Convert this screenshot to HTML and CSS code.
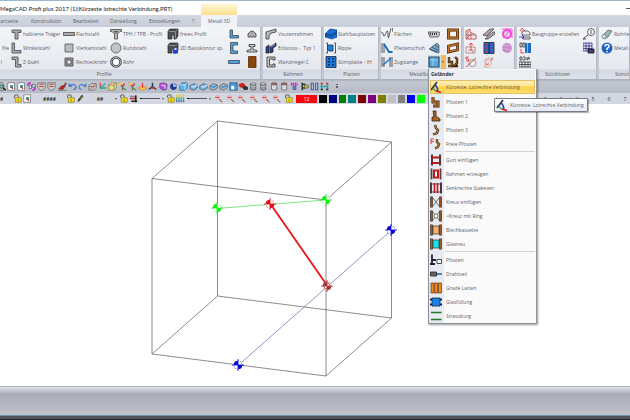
FILE: index.html
```html
<!DOCTYPE html>
<html lang="de">
<head>
<meta charset="utf-8">
<title>MegaCAD Profi plus 2017</title>
<link rel="stylesheet" href="styles.css">
</head>
<body>
<svg class="sprite" aria-hidden="true">
  <!-- steel profiles -->
  <symbol id="tee" viewBox="0 0 12 12"><path d="M2 2h9v2.500H8V11H5V4.500H2z" fill="#a9abb0" stroke="#444"/></symbol>
  <symbol id="ell" viewBox="0 0 12 12"><path d="M2 1h2.500v7.500H11V11H2z" fill="#a9abb0" stroke="#444"/></symbol>
  <symbol id="zed" viewBox="0 0 12 12"><path d="M2 1h6v7.500h3V11H5.500V3.500H2z" fill="#a9abb0" stroke="#444"/></symbol>
  <symbol id="flat" viewBox="0 0 12 12"><path d="M.5 4.500h11v3H.5z" fill="#a9abb0" stroke="#444"/></symbol>
  <symbol id="square" viewBox="0 0 12 12"><path d="M2 2h8v8H2z" fill="#b9bbbf" stroke="#555"/></symbol>
  <symbol id="tube" viewBox="0 0 12 12"><path d="M2 2h8v8H2zM4 4h4v4H4z" fill="#999" fill-rule="evenodd" stroke="#444"/></symbol>
  <symbol id="tph" viewBox="0 0 12 12"><path d="M.5 1.500h11v2H10L7.500 6v5h-3V6L2 3.500H.5zM4 3.500h4L6 5.500z" fill="#bbb" stroke="#444" stroke-width=".8"/></symbol>
  <symbol id="round" viewBox="0 0 12 12"><circle cx="6" cy="6" r="5" fill="#c2c4c7" stroke="#555"/></symbol>
  <symbol id="pipe" viewBox="0 0 12 12"><circle cx="6" cy="6" r="4.500" fill="#fff" stroke="#444" stroke-width="2.600"/><circle cx="6" cy="6" r="4.500" fill="none" stroke="#bbb" stroke-width="1"/></symbol>
  <symbol id="free" viewBox="0 0 12 12"><path d="M1 3l2-2h8v7l-2 3H7V7H5v4H1z" fill="#4d4f54" stroke="#222" stroke-width=".7"/><path d="M1.500 3.500h7l2-2M8.500 3.500v7" stroke="#999" fill="none"/></symbol>
  <symbol id="contour" viewBox="0 0 12 12"><path d="M1 3l2-2h8v7l-2 3H7V7H5v4H1z" fill="#4d4f54" stroke="#222" stroke-width=".7"/><path d="M1.500 3.500h7l2-2" stroke="#999" fill="none"/><path d="M6 6h5v5.500H6z" fill="#2440e0"/><path d="M7.500 6h2v2h-2z" fill="#dde"/></symbol>
  <symbol id="bluell" viewBox="0 0 12 12"><path d="M2 2h2.500v5.500H10.500V10H2z" fill="#4aa3e6" stroke="#444" stroke-width=".8"/></symbol>
  <symbol id="bluec" viewBox="0 0 12 12"><path d="M2.500.5h7v2.500H5v6h4.500v2.500h-7z" fill="#4aa3e6" stroke="#444" stroke-width=".8"/></symbol>
  <symbol id="blueflat" viewBox="0 0 12 12"><path d="M.5 4.500h11v3H.5z" fill="#4aa3e6" stroke="#445"/></symbol>
  <symbol id="dome" viewBox="0 0 12 12"><path d="M2 9V6q2-3 4-3t4 3v3z" fill="#aaa" stroke="#444"/></symbol>
  <symbol id="rail" viewBox="0 0 12 12"><path d="M3 2.500h6v2H7v3l4 1v1.500H1V8.500l4-1v-3H3z" fill="#ccc" stroke="#333"/></symbol>
  <symbol id="wood" viewBox="0 0 12 12"><path d="M2.500.5h7.500v11H2.500z" fill="#8a4608" stroke="#5a2c05"/></symbol>
  <!-- frames and plates -->
  <symbol id="haunch" viewBox="0 0 12 12"><path d="M1 11V4l10-3v3L6 5 4 8v3z" fill="#bbb" stroke="#333"/></symbol>
  <symbol id="corner" viewBox="0 0 12 12"><path d="M1 5l3-2v8H1zM5 5l6-4v3L8 6v4l-3 1z" fill="#264a8c" stroke="#222"/><path d="M6 5l4-3" stroke="#bbb"/></symbol>
  <symbol id="cee" viewBox="0 0 12 12"><path d="M2 1h8v3H8V3H4.500v6H8V8h2v3H2z" fill="#c4c4c4" stroke="#333"/></symbol>
  <symbol id="plates" viewBox="0 0 12 12"><path d="M0 6l5-5 7 1v7l-5 2-7-2z" fill="#1673d4" stroke="#123e86" stroke-width=".7"/><path d="M0 6l7 1 5-4M0 7.500l7 1 5-4" stroke="#0b3778" fill="none" stroke-width=".8"/></symbol>
  <symbol id="rib" viewBox="0 0 12 12"><path d="M1 1h1.500v10H1M9 1h1.500v10H9" fill="none" stroke="#333"/><path d="M2.500 3H8v6H4L2.500 7.500z" fill="#1d7fe0" stroke="#135"/></symbol>
  <symbol id="endplate" viewBox="0 0 12 12"><path d="M1 .5h10v11H1z" fill="#1c7bdc" stroke="#124"/><path d="M4 2v8M8 2v8" stroke="#012" stroke-width="1.500" stroke-dasharray="1.500 1.500"/></symbol>
  <!-- metal construction -->
  <symbol id="faces" viewBox="0 0 12 12"><path d="M0 4q2 0 2.500 3T5 5t2 2 2-3 3 0" fill="none" stroke="#333"/></symbol>
  <symbol id="purlin" viewBox="0 0 12 12"><path d="M1 1v10M3 1v10M7 10h5" stroke="#333"/><path d="M3 2l5 8h3" stroke="#1670c8" stroke-width="2" fill="none"/></symbol>
  <symbol id="tie" viewBox="0 0 12 12"><path d="M1 1v10M3 1v10M9 1v10M11 1v10" stroke="#333"/><path d="M2 9l8-7" stroke="#1a7ad8" stroke-width="1.500"/></symbol>
  <symbol id="grating" viewBox="0 0 12 12"><path d="M0 4h11l1 2-2 3H2z" fill="#ccc" stroke="#444"/><path d="M2 6h8" stroke="#333" stroke-width="2" stroke-dasharray="1 1"/></symbol>
  <symbol id="stairs" viewBox="0 0 12 12"><path d="M1 7l8-6 2 2v8L7 10z" fill="#7fa8c8" stroke="#456" stroke-width=".7"/><path d="M4 5l7 4M7 3l4 3M2 7l7 3" stroke="#245"/></symbol>
  <symbol id="frame" viewBox="0 0 12 12"><path d="M1.500 2h9v8h-9z" fill="none" stroke="#432007" stroke-width="3"/><path d="M1.500 2h9v8h-9z" fill="none" stroke="#c77722" stroke-width="1.600"/></symbol>
  <symbol id="skew" viewBox="0 0 12 12"><path d="M1.500 4l9-2v6l-9 2z" fill="none" stroke="#432007" stroke-width="2.800"/><path d="M1.500 4l9-2v6l-9 2z" fill="none" stroke="#c77722" stroke-width="1.400"/></symbol>
  <symbol id="window" viewBox="0 0 12 12"><path d="M1 1h10v10H1z" fill="#58a9de" stroke="#345" stroke-width="1.200"/><path d="M5 2v8M2 4h8" stroke="#a5d5f2"/></symbol>
  <symbol id="posts" viewBox="0 0 12 12"><path d="M2 1v5h3v4H1M8 1l2 2v4l-3 3h4" fill="none" stroke="#3a2008" stroke-width="2.400"/><path d="M2 1v5h3v4H1M8 1l2 2v4l-3 3" fill="none" stroke="#b87832"/></symbol>
  <symbol id="redframe" viewBox="0 0 12 12"><path d="M1 11V3l4-2v3l6 3v4z" fill="#eee" stroke="#c33"/><path d="M1 7h9M3 3v8M6 5v6M1 11l5-5" stroke="#a55" stroke-width=".8"/></symbol>
  <symbol id="redup" viewBox="0 0 12 12"><path d="M1 11V5h9v6zM3 8h5v3" fill="#eee" stroke="#a77"/><path d="M6 9V1M4 3l2-2 2 2" stroke="#e22" fill="none"/></symbol>
  <symbol id="redcut" viewBox="0 0 12 12"><circle cx="7.500" cy="7" r="3.500" fill="#eee" stroke="#888"/><path d="M1 11L11 2M3.500 1H1v2h2.500v2H1" stroke="#d22" fill="none"/></symbol>
  <symbol id="beams" viewBox="0 0 12 12"><path d="M0 7l7-6h4L4 8zM2 11l8-7h2v2l-7 5z" fill="#aaa" stroke="#444"/><path d="M3 8l7-6" stroke="#b05090"/></symbol>
  <symbol id="bolts" viewBox="0 0 12 12"><path d="M1 .5h10v11H1z" fill="#246ad0" stroke="#123"/><path d="M3.500 2v9M8.500 2v9" stroke="#d22" stroke-width="1.500" stroke-dasharray="1.500 2"/><path d="M6 1v10" stroke="#012"/></symbol>
  <symbol id="redbox" viewBox="0 0 12 12"><path d="M2 4l3-2h5L8 4v5l-2 2H2zM2 4h6M2 7h4" fill="#f4e8e8" stroke="#c99"/><path d="M8 4l2-1M3 9l3-1" stroke="#d44"/></symbol>
  <symbol id="ring" viewBox="0 0 12 12"><circle cx="6" cy="6" r="4" fill="#e6d9ea" stroke="#f4d" stroke-width="2"/><path d="M2 10l8-8M11 1v9M1 1h10" stroke="#e3c"/></symbol>
  <symbol id="ball" viewBox="0 0 12 12"><circle cx="6" cy="6" r="5" fill="#c48fc4"/><path d="M2 3l8 1M1 6l9 2" stroke="#e5b8e5"/></symbol>
  <!-- lists -->
  <symbol id="group" viewBox="0 0 12 12"><path d="M3 3h6l2 2v2H3zM4 9h7v2H4z" fill="#eee" stroke="#444"/><path d="M1 3l2-3 3 3" stroke="#d22" fill="none"/><path d="M0 9h5M3 7l2 2-2 2" stroke="#22c" fill="none"/></symbol>
  <symbol id="dbl" viewBox="0 0 12 12"><path d="M1 1v4h2V1zM4 1v4h2V1z" fill="none" stroke="#333"/><path d="M2 7v4h3" stroke="#e22" fill="none"/><path d="M6 1h6v10H6z" fill="#1b6fc0"/><path d="M8.500 1v10" stroke="#9cd"/></symbol>
  <symbol id="table" viewBox="0 0 12 12"><path d="M1 1v3h2V1zM4 1h2v3H4M8 1v3l2-3v3M0 6h12v5H0zM3 6v5M6 6v5M9 6v5M0 8.500h12" fill="none" stroke="#333"/></symbol>
  <symbol id="balloon" viewBox="0 0 12 12"><circle cx="8" cy="4" r="3.500" fill="#fff" stroke="#333"/><path d="M8 2v4M5 7l-5 4M0 11l3 0" stroke="#222"/></symbol>
  <symbol id="listprint" viewBox="0 0 12 12"><path d="M0 1h9v8H0zM3 1v8M6 1v8M0 4h9M0 6.500h9" fill="#dde" stroke="#338"/><path d="M5 7h6v4H5z" fill="#445" stroke="#113"/></symbol>
  <symbol id="rohr" viewBox="0 0 12 12"><path d="M1 8L7 2l4 1-4 6-4 2z" fill="#9cb6a8" stroke="#567"/><circle cx="3" cy="8.500" r="2" fill="#e8f0ee" stroke="#678"/></symbol>
  <symbol id="help" viewBox="0 0 12 12"><circle cx="6" cy="6" r="5.500" fill="#1c62c4"/><path d="M4 4.500q0-2 2-2t2 1.700q0 1-2 2.300V8M6 9v1.300" stroke="#fff" stroke-width="1.500" fill="none"/></symbol>
  <!-- railing menu -->
  <symbol id="perp" viewBox="0 0 12 12"><path d="M1 9L7 1" stroke="#234" stroke-width="1.600"/><path d="M5 4q2 1 3 6" fill="none" stroke="#1840d0" stroke-width="1.500"/><path d="M3 7q1 3 4 3" fill="none" stroke="#2a6" stroke-width="1.200"/><path d="M6 10l5 1.500" stroke="#e11" stroke-width="1.500"/></symbol>
  <symbol id="post1" viewBox="0 0 12 12"><path d="M3 1v5h5v4H3" fill="none" stroke="#402008" stroke-width="3"/><path d="M3 1v5h5v4H3" fill="none" stroke="#b06c28" stroke-width="1.600"/></symbol>
  <symbol id="post2" viewBox="0 0 12 12"><path d="M3 1h3v5l4 3v2H2V7h2z" fill="#a8662a" stroke="#402008"/></symbol>
  <symbol id="post3" viewBox="0 0 12 12"><path d="M5 1l1 3 2 2-1 3-4 1.500" fill="none" stroke="#402008" stroke-width="2.400"/><path d="M5 1l1 3 2 2-1 3-4 1.500" fill="none" stroke="#c07c34" stroke-width="1.200"/></symbol>
  <symbol id="postf" viewBox="0 0 12 12"><path d="M1 6V1h3M1 3.500h3" fill="none" stroke="#e11"/><path d="M7 1v3l2 2-1 3-3 1.500" fill="none" stroke="#402008" stroke-width="2.400"/><path d="M7 1v3l2 2-1 3-3 1.500" fill="none" stroke="#c07c34" stroke-width="1.200"/></symbol>
  <symbol id="gurt" viewBox="0 0 12 12"><path d="M2 .5v11M10 .5v11" stroke="#533" stroke-width="2"/><path d="M2 3.500h8M2 9h8" stroke="#b11a1a" stroke-width="2"/></symbol>
  <symbol id="rahmen" viewBox="0 0 12 12"><path d="M1.500 .5v11M10.500 .5v11" stroke="#544" stroke-width="1.800"/><path d="M4 2.500h4v7H4z" fill="#fff" stroke="#c01818" stroke-width="2"/></symbol>
  <symbol id="staket" viewBox="0 0 12 12"><path d="M1 .5v11M11 .5v11" stroke="#533" stroke-width="2"/><path d="M1 2h10M1 10h10" stroke="#333"/><path d="M4.500 1v10M7.500 1v10" stroke="#c01818" stroke-width="1.600"/></symbol>
  <symbol id="kreuz" viewBox="0 0 12 12"><path d="M1.500 .5v11M10.500 .5v11" stroke="#402008" stroke-width="2.500"/><path d="M1.500 .5v11M10.500 .5v11" stroke="#a8602a"/><path d="M3 2l6 8M9 2l-6 8" stroke="#555"/></symbol>
  <symbol id="kreuzring" viewBox="0 0 12 12"><path d="M1.500 .5v11M10.500 .5v11" stroke="#402008" stroke-width="2.500"/><path d="M1.500 .5v11M10.500 .5v11" stroke="#a8602a"/><path d="M3 2l6 8M9 2l-6 8" stroke="#555"/><circle cx="6" cy="6" r="2" fill="#fff" stroke="#555"/></symbol>
  <symbol id="blech" viewBox="0 0 12 12"><path d="M3 2h6v8H3z" fill="#f7b070" stroke="#444"/><path d="M1.500 .5v11M10.500 .5v11" stroke="#402008" stroke-width="2.500"/><path d="M1.500 .5v11M10.500 .5v11" stroke="#b06c28"/></symbol>
  <symbol id="glas" viewBox="0 0 12 12"><path d="M3 2h6v8H3z" fill="#0ee4ee" stroke="#444"/><path d="M1.500 .5v11M10.500 .5v11" stroke="#402008" stroke-width="2.500"/><path d="M1.500 .5v11M10.500 .5v11" stroke="#b06c28"/></symbol>
  <symbol id="pfosten" viewBox="0 0 12 12"><path d="M2 .5V10M0 10h5M2 6h4" stroke="#223" stroke-width="1.800"/><path d="M7 5.500h4.500v4H7z" fill="#fff" stroke="#222"/></symbol>
  <symbol id="seil" viewBox="0 0 12 12"><path d="M5 6h7" stroke="#2468b0" stroke-width="1.600"/><path d="M.5 4h6v4h-6z" fill="#666" stroke="#222"/></symbol>
  <symbol id="latten" viewBox="0 0 12 12"><path d="M1 1h3v10H1zM4.700 1h3v10h-3zM8.400 1h3v10h-3z" fill="#f08a24" stroke="#7a3c08" stroke-width=".8"/></symbol>
  <symbol id="fuell" viewBox="0 0 12 12"><path d="M0 3.500h12M0 8.500h12" stroke="#223" stroke-width="2"/><path d="M2 2h8v8H2z" fill="#1483ee" stroke="#124"/></symbol>
  <symbol id="strass" viewBox="0 0 12 12"><path d="M1 2.500h10.500M1 9.500h10.500" stroke="#267a26" stroke-width="1.400"/></symbol>
  <!-- toolbars -->
  <symbol id="doc" viewBox="0 0 12 12"><path d="M1 1h9v10H1z" fill="#fff" stroke="#555"/><path d="M4 4h4v4H4z" fill="#4a9"/><path d="M5 6l3 3" stroke="#c22" stroke-width="1.500"/></symbol>
  <symbol id="search" viewBox="0 0 12 12"><path d="M1 1h6l2 3v7H1z" fill="#cdc" stroke="#333"/><circle cx="6" cy="6" r="2.500" fill="#7bb" stroke="#222"/><path d="M8 8l4 3" stroke="#222" stroke-width="2"/></symbol>
  <symbol id="swap" viewBox="0 0 12 12"><path d="M1 5q0-4 4-4M11 7q0 4-4 4" stroke="#c2c" stroke-width="2" fill="none"/><path d="M3 4h3v5H3zM7 3h4v4H7z" fill="#dde" stroke="#345"/></symbol>
  <symbol id="shield" viewBox="0 0 12 12"><path d="M1 1h10v6l-3 4H4L1 7z" fill="#ccc" stroke="#555"/><path d="M3 3h6M3 6h6" stroke="#c44" stroke-width="1.500"/></symbol>
  <symbol id="erase" viewBox="0 0 12 12"><path d="M1 9l4-4h3l2-4 1 1-3 6-2 2z" fill="#c22" stroke="#522"/><path d="M0 11h11" stroke="#444"/></symbol>
  <symbol id="undo" viewBox="0 0 12 12"><path d="M2 5q6-4 8 0t-3 5M1 2l1 4 4-1" fill="none" stroke="#3174cf" stroke-width="1.600"/></symbol>
  <symbol id="redo" viewBox="0 0 12 12"><path d="M10 5Q4 1 2 5t3 5M11 2l-1 4-4-1" fill="none" stroke="#4283d5" stroke-width="1.600"/></symbol>
  <symbol id="hatch" viewBox="0 0 12 12"><path d="M1 5l3-3h7v6l-3 3H1z" fill="#ccc" stroke="#555"/><path d="M2 10l8-8M5 10l6-6M1 6h7" stroke="#a33"/></symbol>
  <symbol id="axes" viewBox="0 0 12 12"><path d="M3 1v7" stroke="#d33" stroke-width="1.500"/><path d="M3 8h8" stroke="#2a5" stroke-width="2"/><path d="M3 8l7-6" stroke="#2ac" stroke-width="1.500"/></symbol>
  <symbol id="cubey" viewBox="0 0 12 12"><path d="M1 4l3-3h7v7l-3 3H1z" fill="#eddc83" stroke="#665"/><path d="M1 4h7v7M8 4l3-3" fill="none" stroke="#665"/></symbol>
  <symbol id="snap" viewBox="0 0 12 12"><path d="M1 1l5 5 3-4M6 6v5" stroke="#c33" stroke-width="1.700" fill="none"/><path d="M5 7l6 4" stroke="#2a5" stroke-width="2"/><path d="M1 1h4v3H1z" fill="#fc3"/></symbol>
  <symbol id="plane" viewBox="0 0 12 12"><path d="M0 8l6-3 6 3-6 3z" fill="#fc3" stroke="#c73"/><path d="M6 8V1" stroke="#d33" stroke-width="1.500"/></symbol>
  <symbol id="figure" viewBox="0 0 12 12"><path d="M6 1v5l-5 4M6 6l5 4" stroke="#245" stroke-width="2" fill="none"/><path d="M4 8h5" stroke="#d22" stroke-width="1.800"/></symbol>
  <symbol id="cubep" viewBox="0 0 12 12"><path d="M1 2l5-1 5 2-1 7-5 1-4-3z" fill="#b04ad8" stroke="#547"/><path d="M3 4l5 1v4" fill="none" stroke="#ecf" stroke-width="1.500"/></symbol>
  <symbol id="dark" viewBox="0 0 12 12"><circle cx="6" cy="6" r="4.500" fill="#223a90"/><path d="M6 1.500V6h4.500" stroke="#fff" fill="none"/><path d="M6 2A4 4 0 0 1 10 6H6z" fill="#9ae"/></symbol>
  <symbol id="cubeb" viewBox="0 0 12 12"><path d="M1 4l3-3h7v7l-3 3H1z" fill="#59b5ef" stroke="#27568c"/><path d="M1 4h7v7M8 4l3-3" fill="none" stroke="#fff"/></symbol>
  <symbol id="solid" viewBox="0 0 12 12"><path d="M1 5l5-3 5 2v4l-5 3-5-2z" fill="#6dafde" stroke="#356"/><path d="M3 6l3 1 5-3" fill="none" stroke="#eef" stroke-width="1.500"/></symbol>
  <symbol id="gsolid" viewBox="0 0 12 12"><path d="M1 5l5-3 5 2v4l-5 3-5-2z" fill="#a7b4bf" stroke="#444"/><path d="M3 6l3 1 5-3" fill="none" stroke="#3a93dc" stroke-width="1.800"/></symbol>
  <symbol id="sheet" viewBox="0 0 12 12"><path d="M1 1h10v10H1z" fill="#3e9ee2" stroke="#245"/><path d="M3 5h4v5H3z" fill="#fff"/><path d="M7 5l3-3" stroke="#d22"/></symbol>
  <symbol id="bool" viewBox="0 0 12 12"><path d="M0 3l4-2 4 2v4L4 8 0 6z" fill="#c21"/><path d="M5 6l4-1 3 2v3l-4 1-3-2z" fill="#333"/></symbol>
  <symbol id="cyl" viewBox="0 0 12 12"><path d="M2 2v8q4 2 7 0V2z" fill="#999fa5" stroke="#444"/><ellipse cx="5.500" cy="2.500" rx="3.500" ry="1.500" fill="#ddd" stroke="#444"/><path d="M2 6h7" stroke="#ccc"/></symbol>
  <symbol id="cyl2" viewBox="0 0 12 12"><path d="M2 2v8q4 2 7 0V2z" fill="#d8dce0" stroke="#444"/><ellipse cx="5.500" cy="2.500" rx="3.500" ry="1.500" fill="#c66" stroke="#444"/></symbol>
  <symbol id="load" viewBox="0 0 12 12"><path d="M1 3h9" stroke="#c3c" stroke-width="4" stroke-dasharray="2 .6"/><path d="M4 6h4v4H4z" fill="#5a8be8" stroke="#346"/></symbol>
  <symbol id="tree" viewBox="0 0 12 12"><path d="M3 1v10M3 3h4M3 8h4" stroke="#333" stroke-width="2"/><path d="M6 4h5v4H6z" fill="#c2c83a" stroke="#443"/></symbol>
  <symbol id="springs" viewBox="0 0 12 12"><path d="M3 1v10M9 1v10" stroke="#27489c" stroke-width="4"/><path d="M3 2v8M9 2v8" stroke="#cde" stroke-width="1.500"/></symbol>
  <symbol id="nodes" viewBox="0 0 12 12"><path d="M2 2v8M10 2v8M2 6h8" stroke="#2aa" stroke-width="2"/><path d="M1 1h3v2H1zM8 1h3v2H8z" fill="#c33"/><path d="M1 9h3v2H1zM8 9h3v2H8z" fill="#333"/></symbol>
  <symbol id="lock" viewBox="0 0 12 12"><path d="M2 5V3q0-2 2.500-2T7 3v2" fill="none" stroke="#666" stroke-width="1.500"/><path d="M3 5h8v6H3z" fill="#f2dc18" stroke="#8a7410"/><path d="M7 7v3" stroke="#443"/></symbol>
  <symbol id="pen" viewBox="0 0 12 12"><path d="M2 11l1-4 5-6 2 2-5 6z" fill="#333"/><path d="M5 7l4-4" stroke="#db3"/></symbol>
  <symbol id="width" viewBox="0 0 12 12"><path d="M1 3h9" stroke="#222"/><path d="M1 6h9" stroke="#c22" stroke-width="2"/><path d="M3 9.500h8M9 2v9" stroke="#222" stroke-width="2"/></symbol>
  <symbol id="palette" viewBox="0 0 12 12"><path d="M0 2.500h12" stroke="#dc4" stroke-width="3" stroke-dasharray="2 1"/><path d="M0 6h12" stroke="#4a6" stroke-width="3" stroke-dasharray="2 1"/><path d="M0 9.500h12" stroke="#57c" stroke-width="3" stroke-dasharray="2 1"/></symbol>
  <symbol id="zoom" viewBox="0 0 12 12"><circle cx="4.500" cy="4.500" r="2.500" fill="#f5e0e2" stroke="#d88"/><path d="M2 4.500h5" stroke="#d22" stroke-width="1.200"/><path d="M7 7l4 4" stroke="#975" stroke-width="1.500"/></symbol>
  <symbol id="mark" viewBox="-6 -6 12 12" overflow="visible"><circle r="4" fill="#fff" stroke="currentColor" stroke-width=".8"/><path d="M0 0H4A4 4 0 0 0 0-4zM0 0H-4A4 4 0 0 0 0 4z" fill="#fff"/><path d="M0 0V-4A4 4 0 0 0-4 0zM0 0V4A4 4 0 0 0 4 0z" fill="currentColor"/><path d="M-6 0H6M0-6V6" stroke="currentColor" stroke-width=".8"/></symbol>
</svg>

<header class="titlebar">
  <h1 class="title">MegaCAD Profi plus 2017 (1)(Kürzeste lotrechte Verbindung.PRT)</h1>
  <span class="context"></span>
  <button class="minimise" aria-label="Minimieren"></button>
</header>

<nav class="tabs">
  <a href="#" class="start">Startseite</a><a href="#" class="konst">Konstruktion</a><a href="#" class="bearb">Bearbeiten</a><a href="#" class="darst">Darstellung</a><a href="#" class="einst">Einstellungen</a><a href="#" class="frage">?</a><a href="#" class="active">Metall 3D</a>
</nav>

<div class="ribbon">
  <section class="group profile">
    <div class="cmds">
      <span></span>
      <button class="cmd"><svg><use href="#tee"/></svg>halbierte Träger</button>
      <button class="cmd"><svg><use href="#flat"/></svg>Flachstahl</button>
      <button class="cmd"><svg><use href="#tph"/></svg>TPH / TPB - Profil</button>
      <button class="cmd"><svg><use href="#free"/></svg>freies Profil</button>
      <button class="cmd" aria-label="Winkel"><svg><use href="#bluell"/></svg></button>
      <button class="cmd" aria-label="Halbrund"><svg><use href="#dome"/></svg></button>
      <button class="cmd cut">file</button>
      <button class="cmd"><svg><use href="#ell"/></svg>Winkelstahl</button>
      <button class="cmd"><svg><use href="#square"/></svg>Vierkantstahl</button>
      <button class="cmd"><svg><use href="#round"/></svg>Rundstahl</button>
      <button class="cmd"><svg><use href="#contour"/></svg>2D Basiskontur sp.</button>
      <button class="cmd" aria-label="U-Profil"><svg><use href="#bluec"/></svg></button>
      <button class="cmd" aria-label="Schiene"><svg><use href="#rail"/></svg></button>
      <button class="cmd cut last">l</button>
      <button class="cmd"><svg><use href="#zed"/></svg>Z-Stahl</button>
      <button class="cmd"><svg><use href="#tube"/></svg>Rechteckrohr</button>
      <button class="cmd"><svg><use href="#pipe"/></svg>Rohr</button>
      <span></span>
      <button class="cmd" aria-label="Flach"><svg><use href="#blueflat"/></svg></button>
      <button class="cmd" aria-label="Holz"><svg><use href="#wood"/></svg></button>
    </div>
    <h2>Profile</h2>
  </section>
  <section class="group rahmen">
    <div class="cmds">
      <button class="cmd"><svg><use href="#haunch"/></svg>Voutenrahmen</button>
      <button class="cmd"><svg><use href="#corner"/></svg>Eckstoss -&nbsp; Typ 1</button>
      <button class="cmd"><svg><use href="#cee"/></svg>Wandriegel C</button>
    </div>
    <h2>Rahmen</h2>
  </section>
  <section class="group platten">
    <div class="cmds">
      <button class="cmd"><svg><use href="#plates"/></svg>Stahlbauplatten</button>
      <button class="cmd"><svg><use href="#rib"/></svg>Rippe</button>
      <button class="cmd"><svg><use href="#endplate"/></svg>Stirnplatte - IH</button>
    </div>
    <h2>Platten</h2>
  </section>
  <section class="group metallbau">
    <div class="cmds">
      <button class="cmd"><svg><use href="#faces"/></svg>Flächen</button>
      <button class="cmd" aria-label="Gitterrost"><svg><use href="#grating"/></svg></button>
      <button class="cmd" aria-label="Rahmen"><svg><use href="#frame"/></svg></button>
      <button class="cmd"><svg><use href="#purlin"/></svg>Pfettenschuh</button>
      <button class="cmd" aria-label="Treppe"><svg><use href="#stairs"/></svg></button>
      <button class="cmd" aria-label="Schräger Rahmen"><svg><use href="#skew"/></svg></button>
      <button class="cmd"><svg><use href="#tie"/></svg>Zugstange</button>
      <div class="drop">
        <button class="cmd split" aria-label="Geländer"><svg><use href="#window"/></svg><span class="arrow"></span></button>
        <div class="menu" role="menu">
          <h3>Geländer</h3>
          <button class="item current" role="menuitem"><svg><use href="#perp"/></svg>Kürzeste. Lotrechte Verbindung</button>
          <button class="item" role="menuitem"><svg><use href="#post1"/></svg>Pfosten 1</button>
          <button class="item" role="menuitem"><svg><use href="#post2"/></svg>Pfosten 2</button>
          <button class="item" role="menuitem"><svg><use href="#post3"/></svg>Pfosten 3</button>
          <button class="item" role="menuitem"><svg><use href="#postf"/></svg>Freie Pfosten</button>
          <hr>
          <button class="item" role="menuitem"><svg><use href="#gurt"/></svg>Gurt einfügen</button>
          <button class="item" role="menuitem"><svg><use href="#rahmen"/></svg>Rahmen erzeugen</button>
          <button class="item" role="menuitem"><svg><use href="#staket"/></svg>Senkrechte Staketen</button>
          <button class="item" role="menuitem"><svg><use href="#kreuz"/></svg>Kreuz einfügen</button>
          <button class="item" role="menuitem"><svg><use href="#kreuzring"/></svg>&gt;Kreuz mit Ring</button>
          <button class="item" role="menuitem"><svg><use href="#blech"/></svg>Blechkassette</button>
          <button class="item" role="menuitem"><svg><use href="#glas"/></svg>Glasneu</button>
          <hr>
          <button class="item" role="menuitem"><svg><use href="#pfosten"/></svg>Pfosten</button>
          <button class="item" role="menuitem"><svg><use href="#seil"/></svg>Drahtseil</button>
          <button class="item" role="menuitem"><svg><use href="#latten"/></svg>Grade Latten</button>
          <button class="item" role="menuitem"><svg><use href="#fuell"/></svg>Glasfüllung</button>
          <button class="item" role="menuitem"><svg><use href="#strass"/></svg>Strassburg</button>
          <div class="tip" role="tooltip"><svg><use href="#perp"/></svg>Kürzeste. Lotrechte Verbindung</div>
        </div>
      </div>
      <button class="cmd" aria-label="Pfosten"><svg><use href="#posts"/></svg></button>
    </div>
    <h2>Metallbau</h2>
  </section>
  <section class="group tools">
    <div class="cmds">
      <button class="cmd" aria-label="Fachwerk"><svg><use href="#redframe"/></svg></button>
      <button class="cmd" aria-label="Träger"><svg><use href="#beams"/></svg></button>
      <button class="cmd" aria-label="Ring"><svg><use href="#ring"/></svg></button>
      <button class="cmd" aria-label="Heben"><svg><use href="#redup"/></svg></button>
      <button class="cmd" aria-label="Schrauben"><svg><use href="#bolts"/></svg></button>
      <button class="cmd" aria-label="Kugel"><svg><use href="#ball"/></svg></button>
      <button class="cmd" aria-label="Schnitt"><svg><use href="#redcut"/></svg></button>
      <button class="cmd" aria-label="Kasten"><svg><use href="#redbox"/></svg></button>
    </div>
  </section>
  <section class="group listen">
    <div class="cmds">
      <button class="cmd"><svg><use href="#group"/></svg>Baugruppe erstellen</button>
      <button class="cmd" aria-label="Position"><svg><use href="#balloon"/></svg></button>
      <button class="cmd" aria-label="Datenbank"><svg><use href="#dbl"/></svg></button>
      <button class="cmd" aria-label="Liste drucken"><svg><use href="#listprint"/></svg></button>
      <button class="cmd" aria-label="Tabelle"><svg><use href="#table"/></svg></button>
    </div>
    <h2>Stücklisten</h2>
  </section>
  <section class="group sonst">
    <div class="cmds">
      <button class="cmd"><svg><use href="#rohr"/></svg>Rohrleitung</button>
      <button class="cmd"><svg><use href="#help"/></svg>Metall Hilfe</button>
    </div>
    <h2>Sonstiges</h2>
  </section>
</div>

<div class="toolbar upper">
  <div class="strip">
    <svg><use href="#search"/></svg><svg><use href="#doc"/></svg><svg><use href="#doc"/></svg><svg><use href="#swap"/></svg><svg><use href="#shield"/></svg><svg><use href="#shield"/></svg><svg><use href="#erase"/></svg><svg><use href="#undo"/></svg><svg><use href="#redo"/></svg><svg><use href="#hatch"/></svg><svg><use href="#axes"/></svg><svg><use href="#cubey"/></svg><svg><use href="#snap"/></svg><svg><use href="#snap"/></svg><svg><use href="#plane"/></svg><svg><use href="#figure"/></svg><svg><use href="#cubep"/></svg><svg><use href="#dark"/></svg><svg><use href="#cubeb"/></svg><svg><use href="#solid"/></svg><svg><use href="#solid"/></svg><svg><use href="#gsolid"/></svg><svg><use href="#gsolid"/></svg><svg><use href="#sheet"/></svg><svg><use href="#bool"/></svg><svg><use href="#cyl"/></svg><svg><use href="#cyl"/></svg><svg><use href="#cyl2"/></svg><svg><use href="#cyl2"/></svg><svg><use href="#load"/></svg><svg><use href="#tree"/></svg><svg><use href="#springs"/></svg><svg><use href="#nodes"/></svg>
  </div>
  <span class="more"></span>
</div>

<div class="toolbar lower">
  <span class="hash h1">#</span>
  <svg><use href="#lock"/></svg><svg><use href="#doc"/></svg>
  <span class="hash h2">####</span>
  <svg><use href="#lock"/></svg><svg><use href="#pen"/></svg>
  <span class="hash h3">##</span>
  <span class="arrow"></span>
  <svg><use href="#lock"/></svg><svg><use href="#width"/></svg>
  <span class="line"></span><span class="arrow"></span>
  <svg><use href="#lock"/></svg><svg><use href="#palette"/></svg>
  <span class="line"></span><span class="arrow"></span>
  <span class="zooms"><svg><use href="#zoom"/></svg><svg><use href="#zoom"/></svg><svg><use href="#zoom"/></svg><svg><use href="#zoom"/></svg><svg><use href="#zoom"/></svg><svg><use href="#zoom"/></svg><svg><use href="#lock"/></svg></span>
  <button class="colour">12</button>
  <span class="swatches"><i class="black"></i><i class="navy"></i><i class="green"></i><i class="teal"></i><i class="maroon"></i><i class="purple"></i><i class="olive"></i><i class="silver"></i><i class="grey"></i><i class="blue"></i><i class="lime"></i></span>
  <span class="numbers"><b>2</b><b>3</b><b>4</b><b>5</b><b>6</b><b>7</b></span>
</div>

<main class="canvas">
  <svg viewBox="0 104 630 282" role="img" aria-label="Würfel mit kürzester lotrechter Verbindung">
    <g fill="none" stroke="#5a5a5a" stroke-width=".7">
      <path d="M217.500 121L391.500 142V318L217.500 296zM152 178.500L326 200V376L152 354zM217.500 121L152 178.500M391.500 142L326 200M391.500 318L326 376M217.500 296L152 354"/>
    </g>
    <path d="M217 208.500L325.500 200" stroke="#62e062" stroke-width=".8"/>
    <path d="M391.500 230L238.500 365" stroke="#7a7ab8" stroke-width=".8"/>
    <path d="M270.500 204L327.500 286" stroke="#e81515" stroke-width="1.800"/>
    <g color="#12f012"><use href="#mark" x="211" y="202" width="12" height="12"/><use href="#mark" x="320" y="194" width="12" height="12"/></g>
    <g color="#0808e0"><use href="#mark" x="385" y="224" width="12" height="12"/><use href="#mark" x="232" y="359" width="12" height="12"/></g>
    <g color="#e01010"><use href="#mark" x="264" y="198" width="12" height="12"/></g>
    <g color="#b82828"><use href="#mark" x="321" y="280" width="12" height="12"/><circle cx="327" cy="286" r="3" fill="none" stroke="#8a5050"/></g>
  </svg>
</main>

<footer class="status"></footer>
<div class="desk"></div>
</body>
</html>
```
FILE: styles.css
```css
* { box-sizing: border-box; }

body {
  margin: 0;
  min-height: 100vh;
  display: flex;
  flex-direction: column;
  overflow: hidden;
  background: #fff;
  color: #5c5f68;
  font: 5px/8px "Open Sans", "Noto Sans", sans-serif;
}

svg { stroke-width: .8; }
.sprite { display: none; }

button {
  margin: 0;
  padding: 0;
  border: 0;
  background: none;
  color: inherit;
  font: inherit;
  text-align: left;
  white-space: nowrap;
}

h1, h2, h3 { margin: 0; font: inherit; }

/* Title and tabs */
.titlebar {
  display: flex;
  align-items: center;
  height: 15px;
  border-top: 1px solid #9db7cc;
  background: #fff;
}
.title {
  width: 201px;
  padding-top: 2px;
  color: #222;
  font: 6px/8px Lato, "Open Sans", sans-serif;
  white-space: nowrap;
}
.context {
  align-self: flex-end;
  width: 36px;
  height: 11px;
  background: linear-gradient(#fff6d8, #fbe08c);
}
.minimise { width: 4px; height: 1px; margin-left: auto; background: #555; }

.tabs {
  display: flex;
  height: 12px;
  background: linear-gradient(#d3d7df, #c9cdd7);
  line-height: 12px;
}
.tabs a { flex: none; color: #5f646e; text-decoration: none; white-space: nowrap; }
.tabs .start { width: 31px; margin-left: -4px; }
.tabs .konst { width: 46px; padding-left: 4px; }
.tabs .bearb { width: 37px; }
.tabs .darst { width: 39px; }
.tabs .einst { width: 43px; }
.tabs .frage { width: 9px; }
.tabs .active { width: 36px; background: #f0f2f6; text-align: center; }

/* Ribbon */
.ribbon {
  display: flex;
  gap: 2px;
  height: 52px;
  background: #c3c8d2;
}
.group {
  display: flex;
  flex-direction: column;
  flex: none;
  border-right: 1px solid #b3b8c3;
  background: linear-gradient(#f3f5f8, #e5e8ee 42px, #d4d8e2 43px, #dde1ea);
}
.group h2 { line-height: 10px; text-align: center; }
.cmds { display: grid; grid-auto-rows: 14px; height: 42px; }
.cmd { display: flex; align-items: center; gap: 1px; height: 14px; }
.cmd svg { flex: none; width: 12px; height: 12px; }
.cut { justify-content: flex-end; width: 9px; }
.last { width: 2px; }

.profile { width: 261px; }
.profile .cmds { grid-template-columns: 10px 53px 47px 57px 61px 18px 13px; }
.profile h2 { padding-right: 52px; }
.rahmen { width: 59px; padding-left: 2px; }
.platten { width: 55px; padding-left: 1px; }
.metallbau { width: 81px; }
.metallbau .cmds { grid-template-columns: 47px 19px 13px; }
.metallbau .cmd { overflow: hidden; }
.tools { width: 51px; padding-left: 1px; }
.tools .cmds { grid-template-columns: 18px 18px 12px; }
.listen { width: 80px; padding-left: 2px; }
.listen .cmds { grid-template-columns: 64px 12px; }
.sonst { flex: 1 0 30px; overflow: hidden; padding-left: 2px; }
.sonst h2 { padding-left: 14px; text-align: left; }

.arrow {
  width: 0;
  border: 1px solid transparent;
  border-top: 2px solid #555;
  border-bottom: 0;
}
.split { width: 18px; gap: 2px; background: linear-gradient(90deg, #cfe3f2 13px, #f8b95a 13px); }

/* Railing menu */
.drop { position: relative; }
.menu {
  position: absolute;
  z-index: 2;
  top: 14px;
  left: 0;
  width: 109px;
  padding: 1px 1px 0;
  border: 1px solid #8d9097;
  border-top: 0;
  background: linear-gradient(90deg, #e6eaf2 15px, #fafafa 15px);
  box-shadow: 1px 1px 2px #0006;
}
.menu h3 { height: 10px; padding-left: 1px; background: #eceef2; color: #333; font-weight: 700; line-height: 9px; }
.item { display: flex; align-items: center; gap: 4px; width: 100%; height: 14px; }
.item svg { flex: none; width: 12px; height: 12px; }
.current {
  margin-bottom: 1px;
  background: linear-gradient(#fff3c4, #ffe48a 6px, #ffcf45 7px, #ffe07a);
  outline: 1px solid #e3c068;
  outline-offset: -1px;
}
.menu hr { height: 1px; margin: 0 0 1px 15px; border: 0; background: #d0d2d6; }
.tip {
  position: absolute;
  top: 29px;
  left: 65px;
  display: flex;
  align-items: center;
  gap: 2px;
  width: 94px;
  height: 14px;
  padding-left: 1px;
  border: 1px solid #777b84;
  border-radius: 1px;
  background: linear-gradient(#fff, #e6e9f2);
  box-shadow: 1px 1px 1px #0005;
  white-space: nowrap;
}
.tip svg { width: 12px; height: 12px; }

/* Toolbars */
.toolbar { display: flex; align-items: center; }
.toolbar svg { flex: none; width: 9px; height: 9px; }
.upper { height: 14px; background: linear-gradient(#a6abb8, #c3c7d0 3px, #b7bbc5); }
.strip { display: flex; justify-content: space-between; width: 332px; margin-left: -3px; }
.more { width: 2px; height: 4px; margin-left: 7px; border-top: 1px solid #666; border-bottom: 2px solid #666; }
.lower { height: 11px; background: #d3d7e1; color: #333; }
.lower svg { margin-right: 1px; }
.hash { flex: none; font-weight: 700; text-align: center; }
.h1 { width: 13px; text-align: left; }
.h2 { width: 33px; }
.h3 { width: 28px; }
.lower .arrow { margin: 0 2px 0 1px; }
.line { width: 20px; height: 1px; margin: 0 1px; border-left: 2px solid #111; background: #555; }
.zooms { display: flex; justify-content: space-between; width: 80px; margin: 0 2px 0 1px; }
.colour { width: 21px; height: 8px; margin-right: 2px; background: #f50808; color: #fff; text-align: center; }
.swatches { display: flex; gap: 2px; width: 106px; height: 8px; }
.swatches i { flex: 1; }
.black { background: #000; }
.navy { background: #000080; }
.green { background: #008000; }
.teal { background: #008080; }
.maroon { background: #800000; }
.purple { background: #800080; }
.olive { background: #808000; }
.silver { background: #c0c0c0; }
.grey { background: #808080; }
.blue { background: #00f; }
.lime { background: #0f0; }
.numbers { display: flex; margin-left: auto; margin-right: -3px; }
.numbers b { width: 16px; text-align: center; font-weight: 400; }

/* Drawing area */
.canvas { flex: 1; min-height: 0; }
.canvas svg { display: block; width: 100%; height: 100%; }

.status {
  height: 29px;
  border-top: 1px solid #adb2bd;
  background: linear-gradient(#e0e4ec, #c6cad4 3px, #a8acb6 7px, #bfc2c9);
}
.desk { height: 5px; border-top: 1px solid #6c93a8; background: linear-gradient(#51565a 3px, #202428 3px); }
```
